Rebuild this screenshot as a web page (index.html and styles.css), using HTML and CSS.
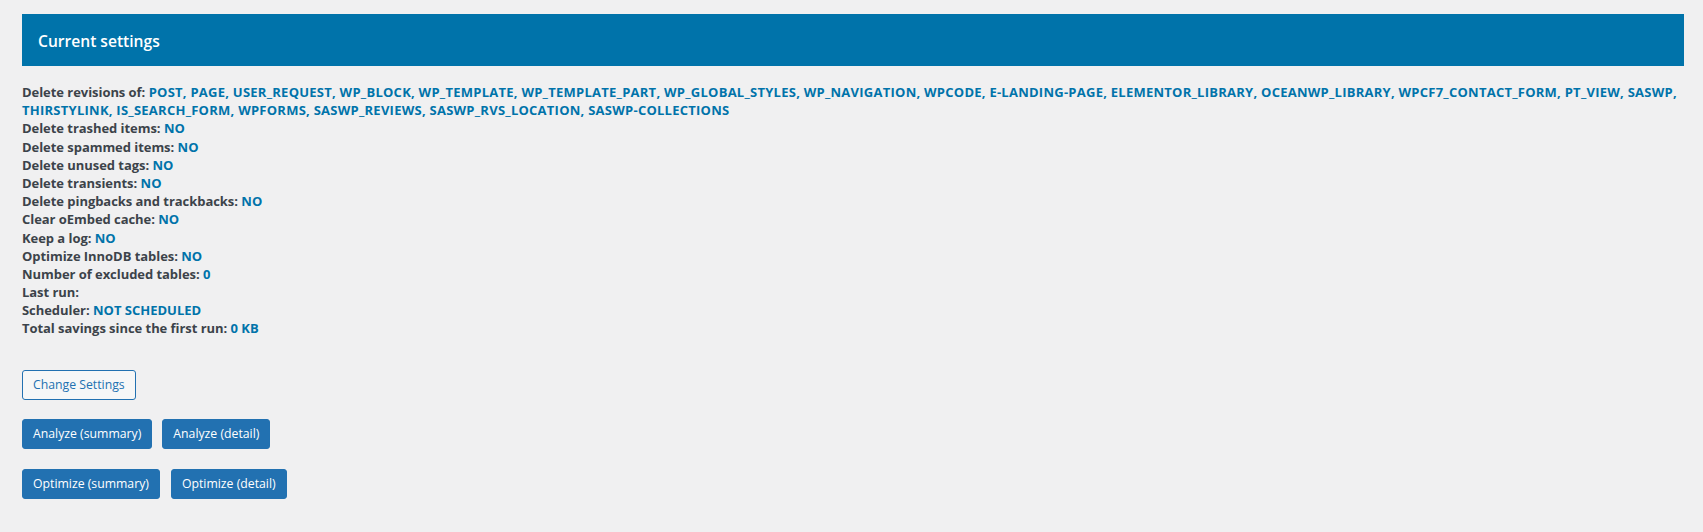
FILE: index.html
```html
<!DOCTYPE html>
<html lang="en">
<head>
<meta charset="utf-8">
<title>Current settings</title>
<link rel="stylesheet" href="styles.css">
</head>
<body>
<div class="wrap">
  <div class="panel-header">
    <h2 class="panel-title">Current settings</h2>
  </div>

  <div class="settings">
    <div class="row"><span class="label">Delete revisions of:</span> <span class="value value-list">POST, PAGE, USER_REQUEST, WP_BLOCK, WP_TEMPLATE, WP_TEMPLATE_PART, WP_GLOBAL_STYLES, WP_NAVIGATION, WPCODE, E-LANDING-PAGE, ELEMENTOR_LIBRARY, OCEANWP_LIBRARY, WPCF7_CONTACT_FORM, PT_VIEW, SASWP, THIRSTYLINK, IS_SEARCH_FORM, WPFORMS, SASWP_REVIEWS, SASWP_RVS_LOCATION, SASWP-COLLECTIONS</span></div>
    <div class="row"><span class="label">Delete trashed items:</span> <span class="value">NO</span></div>
    <div class="row"><span class="label">Delete spammed items:</span> <span class="value">NO</span></div>
    <div class="row"><span class="label">Delete unused tags:</span> <span class="value">NO</span></div>
    <div class="row"><span class="label">Delete transients:</span> <span class="value">NO</span></div>
    <div class="row"><span class="label">Delete pingbacks and trackbacks:</span> <span class="value">NO</span></div>
    <div class="row"><span class="label">Clear oEmbed cache:</span> <span class="value">NO</span></div>
    <div class="row"><span class="label">Keep a log:</span> <span class="value">NO</span></div>
    <div class="row"><span class="label">Optimize InnoDB tables:</span> <span class="value">NO</span></div>
    <div class="row"><span class="label">Number of excluded tables:</span> <span class="value">0</span></div>
    <div class="row"><span class="label">Last run:</span></div>
    <div class="row"><span class="label">Scheduler:</span> <span class="value">NOT SCHEDULED</span></div>
    <div class="row"><span class="label">Total savings since the first run:</span> <span class="value">0 KB</span></div>
  </div>

  <div class="actions">
    <div class="btn-row">
      <button class="btn btn-secondary" type="button">Change Settings</button>
    </div>
    <div class="btn-row">
      <button class="btn btn-primary" type="button">Analyze (summary)</button>
      <button class="btn btn-primary" type="button">Analyze (detail)</button>
    </div>
    <div class="btn-row btn-row-wide">
      <button class="btn btn-primary" type="button">Optimize (summary)</button>
      <button class="btn btn-primary" type="button">Optimize (detail)</button>
    </div>
  </div>
</div>
</body>
</html>
```
FILE: styles.css
```css
html, body {
  margin: 0;
  padding: 0;
  background: #f0f0f1;
}

body {
  font-family: "Open Sans", "Noto Sans", sans-serif;
  font-size: 13px;
  line-height: 1.4;
  color: #3c434a;
}

.wrap {
  padding: 14px 19px 0 22px;
}

.panel-header {
  background: #0073aa;
  height: 52px;
  display: flex;
  align-items: center;
  padding: 2px 16px 0;
  box-sizing: border-box;
}

.panel-title {
  margin: 0;
  font-size: 15.6px;
  font-weight: 600;
  line-height: 1.3;
  color: #ffffff;
}

.settings {
  margin-top: 17px;
  font-weight: 700;
}

.label {
  color: #3c434a;
  letter-spacing: -0.05px;
}

.value {
  color: #0073aa;
}

.value-list {
  letter-spacing: 0.25px;
}

.actions {
  margin-top: 32px;
  display: flex;
  flex-direction: column;
  gap: 19px;
}

.btn-row {
  display: flex;
  gap: 10px;
}

.btn-row-wide {
  gap: 11px;
  margin-top: 1px;
}

.btn {
  font-family: "Open Sans", "Noto Sans", sans-serif;
  font-size: 12.25px;
  font-weight: 400;
  height: 30px;
  line-height: 28px;
  padding: 0 10px;
  border-radius: 3px;
  border: 1px solid #2271b1;
  box-sizing: border-box;
  cursor: pointer;
  white-space: nowrap;
}

.btn-secondary {
  background: #f6f7f7;
  color: #2271b1;
}

.btn-primary {
  background: #2271b1;
  color: #ffffff;
}
```
